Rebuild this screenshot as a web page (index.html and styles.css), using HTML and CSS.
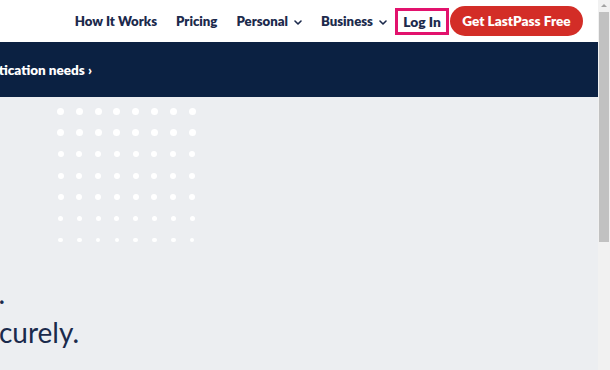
FILE: index.html
```html
<!DOCTYPE html>
<html lang="en">
<head>
    <meta charset="UTF-8">
    <meta name="viewport" content="width=device-width, initial-scale=1.0">
    <title>LastPass</title>
    <link rel="stylesheet" href="styles.css">
</head>
<body>
    <div class="window">
        <div class="page">
            <header class="header">
                <nav class="nav">
                    <a class="nav-link" href="#">How It Works</a>
                    <a class="nav-link" href="#">Pricing</a>
                    <a class="nav-link" href="#">Personal
                        <svg class="chevron" viewBox="0 0 8 5" width="8" height="5"><polyline points="1,1 4,4 7,1" fill="none" stroke="currentColor" stroke-width="1.6" stroke-linecap="round" stroke-linejoin="round"/></svg>
                    </a>
                    <a class="nav-link" href="#">Business
                        <svg class="chevron" viewBox="0 0 8 5" width="8" height="5"><polyline points="1,1 4,4 7,1" fill="none" stroke="currentColor" stroke-width="1.6" stroke-linecap="round" stroke-linejoin="round"/></svg>
                    </a>
                    <a class="login" href="#">Log In</a>
                    <a class="cta" href="#">Get LastPass Free</a>
                </nav>
            </header>

            <div class="promo">
                <div class="promo-text">Find the right solution for your authentication needs ›</div>
            </div>

            <main class="hero">
                <div class="dots" id="dots"></div>
                <div class="hero-title">
                    <div class="line line-one"><span>Only remember one password.</span></div>
                    <div class="line line-two"><span>Access everything, securely.</span></div>
                </div>
            </main>
        </div>

        <div class="scrollbar">
            <div class="scroll-arrow"></div>
            <div class="scroll-thumb"></div>
        </div>
    </div>

    <script>
        // dot pattern, shrinking towards the bottom
        const sizes = [7, 7, 6, 6, 6, 5, 4.5];
        const dots = document.getElementById('dots');
        sizes.forEach(size => {
            for (let i = 0; i < 8; i++) {
                const dot = document.createElement('span');
                dot.className = 'dot';
                dot.style.width = size + 'px';
                dot.style.height = size + 'px';
                dots.appendChild(dot);
            }
        });
    </script>
</body>
</html>
```

FILE: styles.css
```css
body {
    margin: 0;
    font-family: Lato, "Open Sans", Arial, sans-serif;
    background-color: #eceef1;
    overflow: hidden;
}
.window {
    display: flex;
    width: 610px;
    height: 370px;
}
.page {
    flex: 1;
    display: flex;
    flex-direction: column;
    overflow: hidden;
}
.header {
    height: 42px;
    background: white;
    display: flex;
    justify-content: flex-end;
    align-items: center;
    padding-right: 15px;
}
.nav {
    display: flex;
    align-items: center;
}
.nav-link {
    color: #1c2a4c;
    font-weight: 800;
    font-size: 13.2px;
    text-decoration: none;
    margin-left: 19px;
    display: flex;
    align-items: center;
}
.nav-link:first-child {
    margin-left: 0;
}
.chevron {
    margin-left: 6px;
    margin-top: 2px;
}
.login {
    margin-left: 8px;
    width: 48px;
    height: 21px;
    border: 3px solid #e2126d;
    display: flex;
    justify-content: center;
    align-items: center;
    color: #1c2a4c;
    font-weight: 800;
    font-size: 13.8px;
    text-decoration: none;
}
.cta {
    margin-left: 1px;
    height: 30px;
    width: 133px;
    border-radius: 15px;
    background-color: #d32d27;
    color: white;
    font-weight: 800;
    font-size: 13.6px;
    text-decoration: none;
    display: flex;
    justify-content: center;
    align-items: center;
}
.promo {
    height: 55px;
    background-color: #0b2142;
    display: flex;
    align-items: center;
}
.promo-text {
    width: 92px;
    display: flex;
    justify-content: flex-end;
    white-space: nowrap;
    color: white;
    font-weight: 800;
    font-size: 13.5px;
    padding-top: 1px;
}
.hero {
    flex: 1;
    padding-top: 11px;
}
.dots {
    margin-left: 57px;
    display: grid;
    grid-template-columns: repeat(8, 7px);
    grid-auto-rows: 7px;
    column-gap: 11.8px;
    row-gap: 14.4px;
    place-items: center;
}
.dot {
    background: white;
    border-radius: 50%;
}
.hero-title {
    margin-top: 31px;
    color: #1a2a4c;
    font-size: 28px;
    line-height: 39px;
}
.line {
    display: flex;
    justify-content: flex-end;
    white-space: nowrap;
}
.line-one {
    width: 5px;
}
.line-two {
    width: 79px;
}
.scrollbar {
    width: 12px;
    background-color: #f1f1f1;
    display: flex;
    flex-direction: column;
    align-items: center;
}
.scroll-arrow {
    margin-top: 4px;
    width: 0;
    height: 0;
    border-left: 3px solid transparent;
    border-right: 3px solid transparent;
    border-bottom: 3px solid #a3a3a3;
}
.scroll-thumb {
    margin-top: 5px;
    width: 10px;
    height: 230px;
    background-color: #c1c1c1;
}
```
